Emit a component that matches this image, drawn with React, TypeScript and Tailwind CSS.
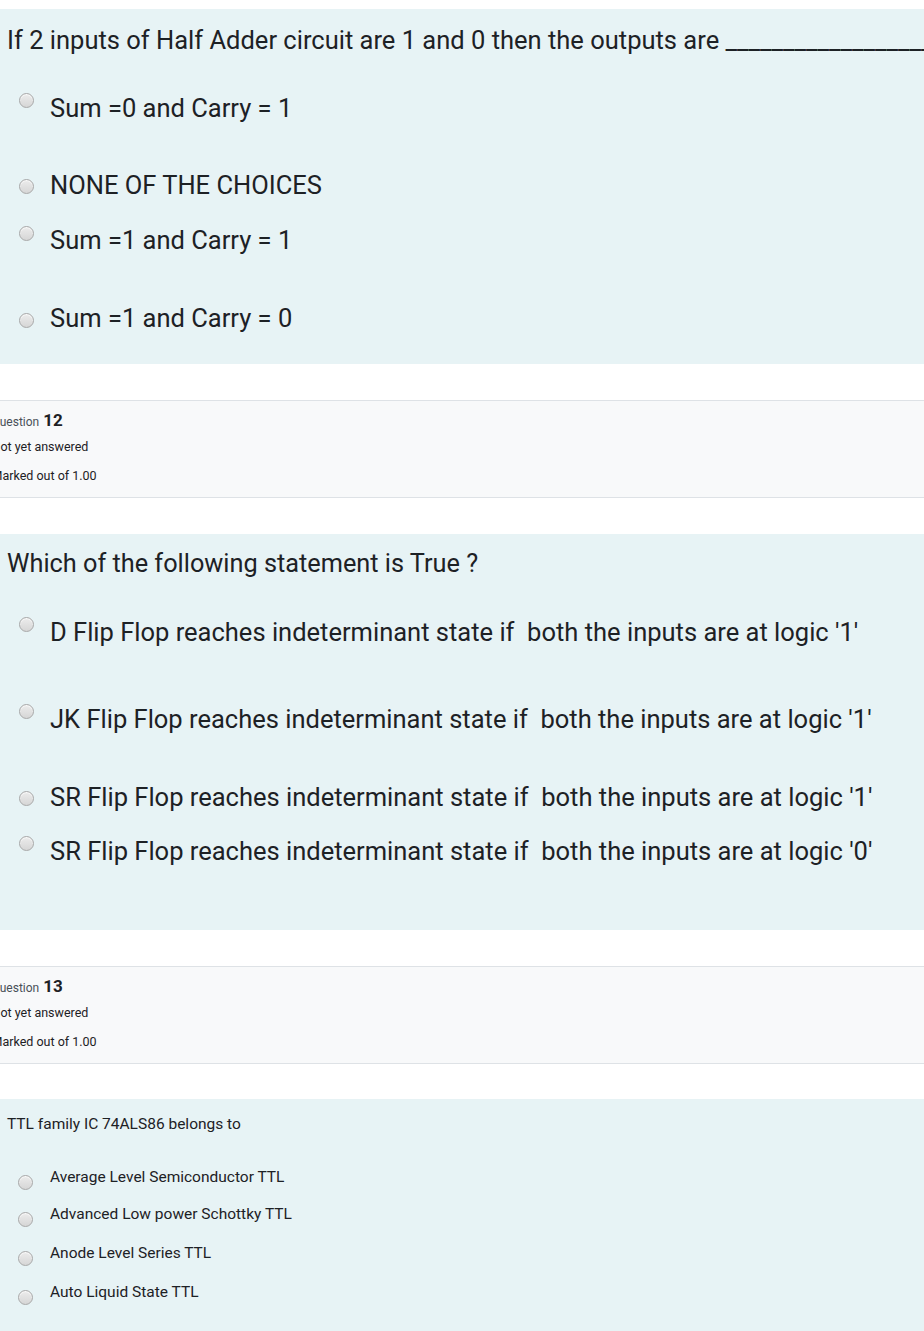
import React from "react";

const Radio = ({ mt }: { mt: string }) => (
  <span
    className={`block shrink-0 w-[15px] h-[15px] rounded-full border border-[#a8a8a8] bg-linear-to-b from-[#ececec] to-[#d6d6d6] shadow-[inset_0_1px_1px_rgba(255,255,255,0.8)] ${mt}`}
  />
);

type Opt = { text: string; rowMt: string; radioMt: string };

const BigOption = ({ o }: { o: Opt }) => (
  <div className={`flex items-start h-[30px] ${o.rowMt}`}>
    <div className="w-[50px] shrink-0 pl-[19px]">
      <Radio mt={o.radioMt} />
    </div>
    <div className="text-[25.5px] leading-[30px] whitespace-nowrap">{o.text}</div>
  </div>
);

const SmallOption = ({ o }: { o: Opt }) => (
  <div className={`flex items-start h-[20px] ${o.rowMt}`}>
    <div className="w-[50px] shrink-0 pl-[18px]">
      <Radio mt={o.radioMt} />
    </div>
    <div className="text-[15.5px] leading-[20px] whitespace-nowrap">{o.text}</div>
  </div>
);

const Info = ({ n }: { n: number }) => (
  <div className="bg-[#f8f9fa] border-y border-[#dee2e6] h-[98px] overflow-hidden">
    <div className="ml-[-8.5px] pt-[9px] text-[#1d2125]">
      <div className="h-[20px] flex items-baseline leading-[20px]">
        <span className="text-[12px] text-[#495057]">Question</span>
        <span className="ml-[4px] text-[17px] font-bold">{n}</span>
      </div>
      <div className="mt-[9px] text-[12.5px] leading-[16px]">Not yet answered</div>
      <div className="mt-[13px] text-[12.5px] leading-[16px]">Marked out of 1.00</div>
    </div>
  </div>
);

export default function App() {
  const q1: Opt[] = [
    { text: "Sum =0 and Carry = 1", rowMt: "mt-[38px]", radioMt: "mt-0" },
    { text: "NONE OF THE CHOICES", rowMt: "mt-[47px]", radioMt: "mt-[9px]" },
    { text: "Sum =1 and Carry = 1", rowMt: "mt-[25px]", radioMt: "mt-px" },
    { text: "Sum =1 and Carry = 0", rowMt: "mt-[48px]", radioMt: "mt-[10px]" },
  ];
  const q2: Opt[] = [
    {
      text: "D Flip Flop reaches indeterminant state if\u00a0 both the inputs are at logic '1'",
      rowMt: "mt-[38px]",
      radioMt: "mt-0",
    },
    {
      text: "JK Flip Flop reaches indeterminant state if\u00a0 both the inputs are at logic '1'",
      rowMt: "mt-[57px]",
      radioMt: "mt-0",
    },
    {
      text: "SR Flip Flop reaches indeterminant state if\u00a0 both the inputs are at logic '1'",
      rowMt: "mt-[48px]",
      radioMt: "mt-[9px]",
    },
    {
      text: "SR Flip Flop reaches indeterminant state if\u00a0 both the inputs are at logic '0'",
      rowMt: "mt-[24px]",
      radioMt: "mt-0",
    },
  ];
  const q3: Opt[] = [
    { text: "Average Level Semiconductor TTL", rowMt: "mt-[33px]", radioMt: "mt-[8px]" },
    { text: "Advanced Low power Schottky TTL", rowMt: "mt-[17px]", radioMt: "mt-[8px]" },
    { text: "Anode Level Series TTL", rowMt: "mt-[19px]", radioMt: "mt-[8px]" },
    { text: "Auto Liquid State TTL", rowMt: "mt-[19px]", radioMt: "mt-[8px]" },
  ];

  return (
    <div
      className="w-[924px] min-h-[1331px] bg-white text-[#1d2125] overflow-hidden"
      style={{ fontFamily: "Roboto, 'Noto Sans', sans-serif" }}
    >
      <div className="h-[9px]" />
      <div className="bg-[#e7f3f5] h-[355px] overflow-hidden pl-[7px] pt-[16px]">
        <div className="text-[25.5px] leading-[30px] whitespace-nowrap">
          If 2 inputs of Half Adder circuit are 1 and 0 then the outputs are ______________________
        </div>
        <div className="ml-[-7px]">
          {q1.map((o, i) => (
            <BigOption key={i} o={o} />
          ))}
        </div>
      </div>
      <div className="h-[36px]" />
      <Info n={12} />
      <div className="h-[36px]" />
      <div className="bg-[#e7f3f5] h-[396px] overflow-hidden pl-[7px] pt-[15px]">
        <div className="text-[25.3px] leading-[30px] whitespace-nowrap">Which of the following statement is True ?</div>
        <div className="ml-[-7px]">
          {q2.map((o, i) => (
            <BigOption key={i} o={o} />
          ))}
        </div>
      </div>
      <div className="h-[36px]" />
      <Info n={13} />
      <div className="h-[35px]" />
      <div className="bg-[#e7f3f5] h-[240px] overflow-hidden pl-[7px] pt-[15px]">
        <div className="text-[15.5px] leading-[20px] whitespace-nowrap">TTL family IC 74ALS86 belongs to</div>
        <div className="ml-[-7px]">
          {q3.map((o, i) => (
            <SmallOption key={i} o={o} />
          ))}
        </div>
      </div>
    </div>
  );
}
